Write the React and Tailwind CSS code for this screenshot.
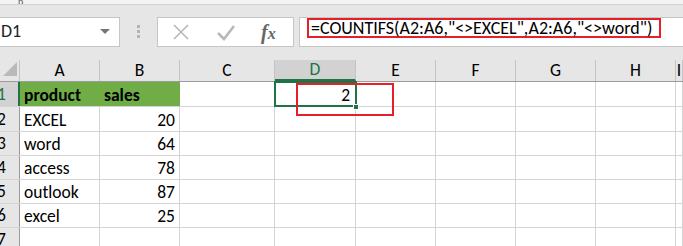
import React from 'react'

const font = { fontFamily: 'Carlito, Lato, "Liberation Sans", sans-serif' }

const cols = [
  { key: 'A', w: 'w-[80px]' },
  { key: 'B', w: 'w-[80px]' },
  { key: 'C', w: 'w-[95px]' },
  { key: 'D', w: 'w-[81px]' },
  { key: 'E', w: 'w-[80px]' },
  { key: 'F', w: 'w-[80px]' },
  { key: 'G', w: 'w-[80px]' },
  { key: 'H', w: 'w-[80px]' },
  { key: 'I', w: 'flex-1' },
]

const rows = [
  { n: 1, h: 'h-[25px]', A: 'product', B: 'sales', head: true },
  { n: 2, h: 'h-[25px]', A: 'EXCEL', B: '20' },
  { n: 3, h: 'h-[24px]', A: 'word', B: '64' },
  { n: 4, h: 'h-[24px]', A: 'access', B: '78' },
  { n: 5, h: 'h-[24px]', A: 'outlook', B: '87' },
  { n: 6, h: 'h-[24px]', A: 'excel', B: '25' },
  { n: 7, h: 'h-[24px]' },
]

function Cell({ col, row }) {
  const base = `${col.w} h-full shrink-0 border-r border-[#d4d4d4] flex items-end text-[17.5px] leading-[22px] text-black`
  if (row.head && (col.key === 'A' || col.key === 'B')) {
    return (
      <div className={`${base} bg-[#70ad47] border-r-[#70ad47] font-bold pl-[4px]`}>
        {row[col.key]}
      </div>
    )
  }
  if (col.key === 'A') return <div className={`${base} pl-[4px]`}>{row.A}</div>
  if (col.key === 'B') return <div className={`${base} justify-end pr-[4px]`}>{row.B}</div>
  if (col.key === 'D' && row.n === 1) return <div className={`${base} justify-end pr-[5px]`}>2</div>
  return <div className={base} />
}

export default function App() {
  return (
    <div className="relative w-[683px] h-[246px] overflow-hidden bg-[#e6e6e6]" style={font}>
      {/* ribbon edge */}
      <div className="h-[5px] bg-[#f3f3f3] border-b border-[#d0d0d0] pl-[18px] text-[10px] leading-[4px] text-[#555] overflow-hidden">p</div>

      {/* formula bar */}
      <div className="flex items-center h-[55px] pb-[2px]">
        <div className="w-[120px] h-[30px] bg-white border border-[#c6c6c6] border-l-0 flex items-center justify-between pl-[1px] pr-[9px]">
          <span className="text-[18px] text-[#222]">D1</span>
          <span className="w-0 h-0 border-l-[5px] border-r-[5px] border-t-[5px] border-l-transparent border-r-transparent border-t-[#777]" />
        </div>
        <div className="w-[37px] flex flex-col items-center gap-[2px]">
          <span className="w-[3px] h-[3px] bg-[#b4b4b4]" />
          <span className="w-[3px] h-[3px] bg-[#b4b4b4]" />
          <span className="w-[3px] h-[3px] bg-[#b4b4b4]" />
        </div>
        <div className="w-[137px] h-[30px] bg-white border border-[#c6c6c6] flex items-center">
          <svg width="18" height="18" viewBox="0 0 18 18" className="ml-[14px]">
            <path d="M2 2 L16 16 M16 2 L2 16" stroke="#b8b8b8" strokeWidth="1.6" fill="none" />
          </svg>
          <svg width="18" height="18" viewBox="0 0 18 18" className="ml-[27px]">
            <path d="M1 10 L7 16 L17 3" stroke="#b8b8b8" strokeWidth="2.6" fill="none" />
          </svg>
          <span className="ml-[26px] text-[20px] italic font-bold text-[#666]" style={{ fontFamily: '"Liberation Serif", serif' }}>
            f<span className="text-[16px]">x</span>
          </span>
        </div>
        <div className="ml-[5px] flex-1 h-[30px] bg-white border border-[#c6c6c6] border-r-0" />
      </div>

      {/* formula text box */}
      <div className="absolute left-[307px] top-[18px] w-[354px] h-[20px] border-2 border-[#e5202a] flex items-center pl-[2px] text-[18px] text-black whitespace-nowrap">
        =COUNTIFS(A2:A6,"&lt;&gt;EXCEL",A2:A6,"&lt;&gt;word")
      </div>

      {/* sheet */}
      <div className="bg-white">
        <div className="flex h-[22px] bg-[#e6e6e6] border-b border-[#9b9b9b]">
          <div className="w-[20px] shrink-0 border-r border-[#c4c4c4]">
            <svg width="20" height="21" viewBox="0 0 20 21">
              <polygon points="17,2 17,16 3,16" fill="#b9b9b9" />
            </svg>
          </div>
          {cols.map(c => (
            <div
              key={c.key}
              className={`${c.w} shrink-0 border-r border-[#c4c4c4] flex items-center justify-center text-[17.5px] ${c.key === 'D' ? 'bg-[#d2d2d2] text-[#217346] border-b-2 border-b-[#217346]' : 'text-black'}`}
            >
              {c.key}
            </div>
          ))}
        </div>
        {rows.map(r => (
          <div key={r.n} className={`flex ${r.h} border-b border-[#d4d4d4]`}>
            <div className={`w-[20px] shrink-0 flex items-center text-[17.5px] overflow-hidden ${r.n === 1 ? 'bg-[#d2d2d2] text-[#217346] border-r-2 border-[#217346]' : 'bg-[#e6e6e6] text-black border-r border-[#9b9b9b]'}`}>
              <span className="-ml-[3px]">{r.n}</span>
            </div>
            {cols.map(c => <Cell key={c.key} col={c} row={r} />)}
          </div>
        ))}
      </div>

      {/* active cell D1 */}
      <div className="absolute left-[274px] top-[81px] w-[83px] h-[26px] border-2 border-[#217346]" />
      <div className="absolute left-[353px] top-[104px] w-[6px] h-[6px] bg-[#217346] border border-white" />

      {/* annotation box */}
      <div className="absolute left-[296px] top-[83px] w-[98px] h-[33px] border-2 border-[#e5202a]" />
    </div>
  )
}
